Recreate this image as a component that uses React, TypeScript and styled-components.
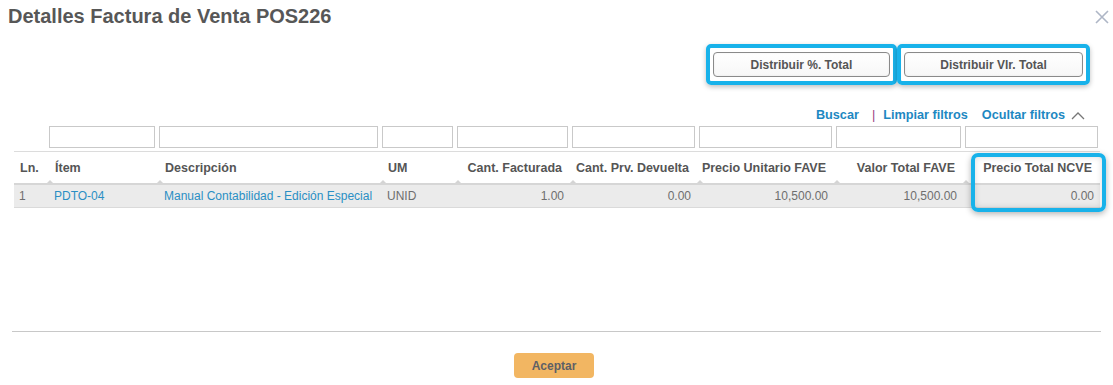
import React from "react";
import styled, { createGlobalStyle } from "styled-components";

const GlobalStyle = createGlobalStyle`
  html, body { margin: 0; padding: 0; background: #fff; }
  body { font-family: "Liberation Sans", Arial, sans-serif; color: #555; }
  * { box-sizing: border-box; }
`;

const Dialog = styled.div`
  width: 1113px;
  height: 385px;
  display: flex;
  flex-direction: column;
  background: #fff;
`;

const Header = styled.div`
  display: flex;
  justify-content: space-between;
  align-items: flex-start;
  padding: 4px 4px 0 8px;
  height: 40px;
`;

const Title = styled.h1`
  margin: 0;
  font-size: 20px;
  line-height: 24px;
  font-weight: bold;
  color: #575757;
`;

const CloseButton = styled.button`
  border: 0;
  background: transparent;
  padding: 0;
  margin-top: 6px;
  width: 14px;
  height: 14px;
  cursor: pointer;
  display: flex;
`;

const Toolbar = styled.div`
  display: flex;
  justify-content: flex-end;
  padding-right: 23px;
  margin-top: 4px;
`;

const Highlight = styled.div`
  border: 4px solid #18b2ea;
  border-radius: 5px;
  padding: 4px 3px 4px 3px;
  box-shadow: 0 2px 5px rgba(0, 0, 0, 0.25);
`;

const ActionButton = styled.button<{ $w: number }>`
  width: ${(p) => p.$w}px;
  height: 25px;
  background: linear-gradient(#fff, #f7f7f7);
  border: 1px solid #8a8a8a;
  border-radius: 4px;
  font-family: "Liberation Sans", Arial, sans-serif;
  font-weight: bold;
  font-size: 12px;
  color: #555;
  box-shadow: inset 0 0 2px rgba(0, 0, 0, 0.08);
  cursor: pointer;
`;

const FilterLinks = styled.div`
  display: flex;
  justify-content: flex-end;
  align-items: center;
  padding-right: 28px;
  margin-top: 21px;
  height: 18px;
  font-size: 12.7px;
  font-weight: bold;
`;

const LinkText = styled.a`
  color: #1d88c2;
  text-decoration: none;
  cursor: pointer;
`;

const Separator = styled.span`
  color: #9b3a82;
  font-weight: normal;
  margin: 0 8px 0 13px;
`;

const Toggle = styled.span`
  display: inline-flex;
  align-items: center;
  gap: 6px;
  margin-left: 14px;
`;

const TableWrap = styled.div`
  position: relative;
  margin: 2px 0 0 14px;
  width: 1086px;
`;

const Table = styled.table`
  width: 1086px;
  border-collapse: collapse;
  table-layout: fixed;
  font-size: 12px;
`;

const FilterCell = styled.td`
  padding: 0 2px 3px 2px;
  height: 25px;
`;

const FilterInput = styled.input`
  width: 100%;
  height: 22px;
  border: 1px solid #c9c9c9;
  display: block;
  font-size: 12px;
`;

const HeadCell = styled.th<{ $right?: boolean }>`
  position: relative;
  height: 32px;
  padding: ${(p) => (p.$right ? "1px 8px 0 4px" : "1px 4px 0 8px")};
  text-align: ${(p) => (p.$right ? "right" : "left")};
  font-size: 12.5px;
  font-weight: bold;
  color: #555;
  border-top: 1px solid #dcdcdc;
  border-bottom: 2px solid #d6d6d6;
  white-space: nowrap;
  overflow: hidden;
  &::after {
    content: "";
    position: absolute;
    left: 0;
    bottom: 0;
    border-left: 3px solid transparent;
    border-right: 3px solid transparent;
    border-bottom: 3px solid #d4d4d4;
  }
`;

const HeadCellFirst = styled(HeadCell)`
  padding: 1px 4px 0 6px;
  &::after { display: none; }
`;

const Row = styled.tr`
  background: #ebebeb;
  border-bottom: 1px solid #dadada;
`;

const Cell = styled.td<{ $right?: boolean; $link?: boolean }>`
  height: 24px;
  padding: ${(p) => (p.$right ? "0 6px 0 4px" : "0 4px 0 7px")};
  text-align: ${(p) => (p.$right ? "right" : "left")};
  color: ${(p) => (p.$link ? "#2a8fc4" : "#6e6e6e")};
  white-space: nowrap;
  overflow: hidden;
  &:first-child { padding-left: 5px; }
`;

const ColumnHighlight = styled.div`
  position: absolute;
  left: 957px;
  top: 27px;
  width: 135px;
  height: 59px;
  border: 4px solid #18b2ea;
  border-radius: 7px;
  box-shadow: 0 2px 6px rgba(0, 0, 0, 0.3), inset 0 0 6px rgba(0, 0, 0, 0.15);
  pointer-events: none;
`;

const Spacer = styled.div`
  flex: 1;
`;

const Divider = styled.hr`
  margin: 0 12px 0 12px;
  border: 0;
  border-top: 1px solid #c8c8c8;
  height: 0;
`;

const Footer = styled.div`
  display: flex;
  justify-content: center;
  padding: 21px 0 7px 0;
`;

const AcceptButton = styled.button`
  width: 80px;
  height: 25px;
  margin-right: 5px;
  background: #f2b662;
  border: 0;
  border-radius: 4px;
  font-family: "Liberation Sans", Arial, sans-serif;
  font-weight: bold;
  font-size: 12px;
  color: #5e6066;
  cursor: pointer;
`;

const widths = [33, 110, 223, 75, 115, 127, 137, 129, 137];

type Col = { label: string; right?: boolean };
const columns: Col[] = [
  { label: "Ln." },
  { label: "Ítem" },
  { label: "Descripción" },
  { label: "UM" },
  { label: "Cant. Facturada", right: true },
  { label: "Cant. Prv. Devuelta", right: true },
  { label: "Precio Unitario FAVE", right: true },
  { label: "Valor Total FAVE", right: true },
  { label: "Precio Total NCVE", right: true },
];

const row = [
  { v: "1" },
  { v: "PDTO-04", link: true },
  { v: "Manual Contabilidad - Edición Especial", link: true },
  { v: "UNID" },
  { v: "1.00", right: true },
  { v: "0.00", right: true },
  { v: "10,500.00", right: true },
  { v: "10,500.00", right: true },
  { v: "0.00", right: true },
];

export default function App() {
  return (
    <>
      <GlobalStyle />
      <Dialog>
        <Header>
          <Title>Detalles Factura de Venta POS226</Title>
          <CloseButton aria-label="Cerrar">
            <svg width="14" height="14" viewBox="0 0 14 14">
              <path d="M1 1 L13 13 M13 1 L1 13" stroke="#aeb6c6" strokeWidth="1.6" />
            </svg>
          </CloseButton>
        </Header>
        <Toolbar>
          <Highlight>
            <ActionButton $w={177}>Distribuir %. Total</ActionButton>
          </Highlight>
          <Highlight>
            <ActionButton $w={179}>Distribuir Vlr. Total</ActionButton>
          </Highlight>
        </Toolbar>
        <FilterLinks>
          <LinkText>Buscar</LinkText>
          <Separator>|</Separator>
          <LinkText>Limpiar filtros</LinkText>
          <Toggle>
            <LinkText>Ocultar filtros</LinkText>
            <svg width="14" height="9" viewBox="0 0 14 9">
              <path d="M1 8 L7 2 L13 8" fill="none" stroke="#777" strokeWidth="1.3" />
            </svg>
          </Toggle>
        </FilterLinks>
        <TableWrap>
          <Table>
            <colgroup>
              {widths.map((w, i) => (
                <col key={i} style={{ width: w }} />
              ))}
            </colgroup>
            <thead>
              <tr>
                <td />
                {widths.slice(1).map((_, i) => (
                  <FilterCell key={i}>
                    <FilterInput />
                  </FilterCell>
                ))}
              </tr>
              <tr>
                {columns.map((c, i) =>
                  i === 0 ? (
                    <HeadCellFirst key={i}>{c.label}</HeadCellFirst>
                  ) : (
                    <HeadCell key={i} $right={c.right}>
                      {c.label}
                    </HeadCell>
                  )
                )}
              </tr>
            </thead>
            <tbody>
              <Row>
                {row.map((c, i) => (
                  <Cell key={i} $right={c.right} $link={c.link}>
                    {c.v}
                  </Cell>
                ))}
              </Row>
            </tbody>
          </Table>
          <ColumnHighlight />
        </TableWrap>
        <Spacer />
        <Divider />
        <Footer>
          <AcceptButton>Aceptar</AcceptButton>
        </Footer>
      </Dialog>
    </>
  );
}
